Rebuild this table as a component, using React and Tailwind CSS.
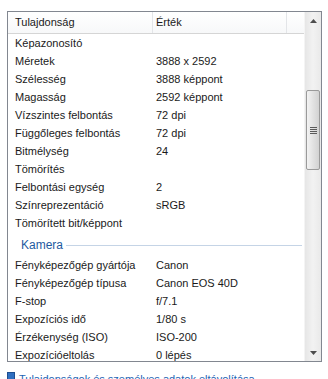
import React from 'react';

const imageRows = [
  ['Képazonosító', ''],
  ['Méretek', '3888 x 2592'],
  ['Szélesség', '3888 képpont'],
  ['Magasság', '2592 képpont'],
  ['Vízszintes felbontás', '72 dpi'],
  ['Függőleges felbontás', '72 dpi'],
  ['Bitmélység', '24'],
  ['Tömörítés', ''],
  ['Felbontási egység', '2'],
  ['Színreprezentáció', 'sRGB'],
  ['Tömörített bit/képpont', ''],
];

const cameraRows = [
  ['Fényképezőgép gyártója', 'Canon'],
  ['Fényképezőgép típusa', 'Canon EOS 40D'],
  ['F-stop', 'f/7.1'],
  ['Expozíciós idő', '1/80 s'],
  ['Érzékenység (ISO)', 'ISO-200'],
  ['Expozícióeltolás', '0 lépés'],
];

const Row = ({ name, value }) => (
  <div className="flex h-[18px] items-center shrink-0">
    <div className="w-[145px] pl-[7px] whitespace-nowrap">{name}</div>
    <div className="pl-[3px] whitespace-nowrap">{value}</div>
  </div>
);

const ScrollBar = () => (
  <div className="w-[17px] shrink-0 flex flex-col bg-gradient-to-r from-[#e6e6e6] via-[#f2f2f2] to-[#e9e9e9] border-l border-[#f4f4f4]">
    <div className="h-[17px] flex items-center justify-center">
      <svg width="7" height="4" viewBox="0 0 7 4">
        <path d="M0 4 L3.5 0 L7 4 Z" fill="#4d4d4d" />
      </svg>
    </div>
    <div className="h-[61px]" />
    <div className="h-[80px] mx-[1px] rounded-[2px] border border-[#9a9a9a] bg-gradient-to-r from-[#f3f3f3] via-[#e2e2e2] to-[#d2d2d2] flex items-center justify-center">
      <div className="flex flex-col gap-[1px]">
        <div className="w-[7px] h-[1px] bg-[#5a5a5a]" />
        <div className="w-[7px] h-[1px] bg-[#5a5a5a]" />
        <div className="w-[7px] h-[1px] bg-[#5a5a5a]" />
        <div className="w-[7px] h-[1px] bg-[#5a5a5a]" />
      </div>
    </div>
    <div className="flex-1" />
    <div className="h-[17px] flex items-center justify-center">
      <svg width="7" height="4" viewBox="0 0 7 4">
        <path d="M0 0 L7 0 L3.5 4 Z" fill="#4d4d4d" />
      </svg>
    </div>
  </div>
);

export default function App() {
  return (
    <div
      className="w-[328px] h-[379px] bg-white overflow-hidden pt-[11px] px-[7px] text-[11px] text-[#1a1a1a]"
      style={{ fontFamily: '"Liberation Sans", Arial, sans-serif' }}
    >
      <div className="h-[351px] w-[315px] border border-[#828790] flex overflow-hidden">
        <div className="flex-1 flex flex-col overflow-hidden">
          {/* column header */}
          <div className="h-[22px] shrink-0 flex items-center bg-gradient-to-b from-white to-[#f7f8f9] border-b border-[#d5d5d5]">
            <div className="w-[145px] h-full flex items-center pl-[7px] border-r border-[#e3e5e8]">Tulajdonság</div>
            <div className="w-[134px] h-full flex items-center pl-[3px] border-r border-[#e3e5e8]">Érték</div>
            <div className="flex-1" />
          </div>

          {imageRows.map(([n, v]) => (
            <Row key={n} name={n} value={v} />
          ))}

          {/* group header */}
          <div className="h-[24px] shrink-0 flex items-center pl-[13px] pr-[2px] pt-[2px]">
            <span className="text-[#1e5aa0] text-[12px] mr-[3px]">Kamera</span>
            <div className="flex-1 h-[1px] bg-[#c5d4e6]" />
          </div>

          {cameraRows.map(([n, v]) => (
            <Row key={n} name={n} value={v} />
          ))}
        </div>
        <ScrollBar />
      </div>

      <div className="mt-[9px] flex items-start gap-[4px] text-[#1e64b4]">
        <div className="w-[8px] h-[9px] mt-[1px] bg-[#2f6fc0] border border-[#1d4f91]" />
        <span className="whitespace-nowrap">Tulajdonságok és személyes adatok eltávolítása</span>
      </div>
    </div>
  );
}
